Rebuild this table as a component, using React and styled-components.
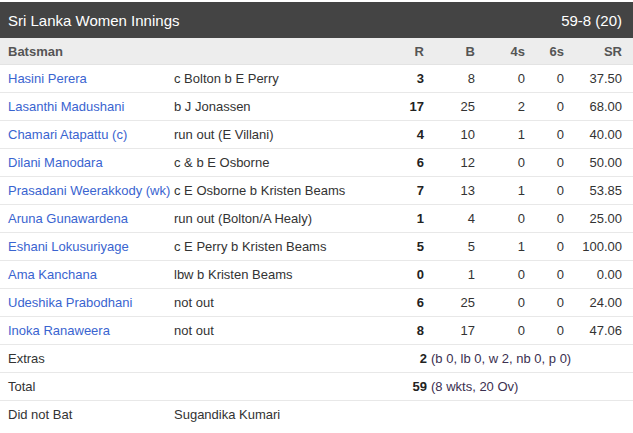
import React from 'react'
import styled, { createGlobalStyle } from 'styled-components'

const GlobalStyle = createGlobalStyle`
  body {
    margin: 0;
    background: #fff;
    font-family: "Liberation Sans", Arial, sans-serif;
  }
`

const Card = styled.div`
  width: 633px;
  padding-top: 2px;
  font-size: 13px;
  color: #333;
`

const TitleBar = styled.div`
  display: flex;
  justify-content: space-between;
  align-items: center;
  height: 36px;
  padding: 0 11px 0 8px;
  background: #444;
  color: #fff;
  font-size: 15px;
`

const Row = styled.div`
  display: grid;
  grid-template-columns: 166px 206px 44px 51px 50px 39px 58px;
  align-items: center;
  height: ${p => (p.head ? 26 : 27)}px;
  padding: 0 11px 0 8px;
  background: ${p => (p.head ? '#ededed' : '#fff')};
  border-bottom: 1px solid ${p => (p.head ? '#e3e3e3' : '#e8e8e8')};
  color: ${p => (p.head ? '#555' : '#333')};
  font-weight: ${p => (p.head ? 'bold' : 'normal')};
  white-space: nowrap;

  &:last-child {
    border-bottom-color: transparent;
  }
`

const Name = styled.span`
  color: ${p => (p.link ? '#3a64d0' : '#333')};
`

const Num = styled.span`
  text-align: right;
  font-weight: ${p => (p.strong ? 'bold' : 'inherit')};
  color: ${p => (p.strong ? '#222' : 'inherit')};
`

const Summary = styled.span`
  grid-column: 3 / -1;
  display: flex;
`

const SummaryNum = styled.span`
  width: 47px;
  text-align: right;
  font-weight: bold;
  color: #222;
`

const Detail = styled.span`
  margin-left: 4px;
  color: #3b3050;
`

const batsmen = [
  ['Hasini Perera', 'c Bolton b E Perry', 3, 8, 0, 0, '37.50'],
  ['Lasanthi Madushani', 'b J Jonassen', 17, 25, 2, 0, '68.00'],
  ['Chamari Atapattu (c)', 'run out (E Villani)', 4, 10, 1, 0, '40.00'],
  ['Dilani Manodara', 'c & b E Osborne', 6, 12, 0, 0, '50.00'],
  ['Prasadani Weerakkody (wk)', 'c E Osborne b Kristen Beams', 7, 13, 1, 0, '53.85'],
  ['Aruna Gunawardena', 'run out (Bolton/A Healy)', 1, 4, 0, 0, '25.00'],
  ['Eshani Lokusuriyage', 'c E Perry b Kristen Beams', 5, 5, 1, 0, '100.00'],
  ['Ama Kanchana', 'lbw b Kristen Beams', 0, 1, 0, 0, '0.00'],
  ['Udeshika Prabodhani', 'not out', 6, 25, 0, 0, '24.00'],
  ['Inoka Ranaweera', 'not out', 8, 17, 0, 0, '47.06'],
]

export default function App() {
  return (
    <Card>
      <GlobalStyle />
      <TitleBar>
        <span>Sri Lanka Women Innings</span>
        <span>59-8 (20)</span>
      </TitleBar>
      <Row head>
        <span>Batsman</span>
        <span />
        <Num>R</Num>
        <Num>B</Num>
        <Num>4s</Num>
        <Num>6s</Num>
        <Num>SR</Num>
      </Row>
      {batsmen.map(([name, how, r, b, fours, sixes, sr]) => (
        <Row key={name}>
          <Name link>{name}</Name>
          <span>{how}</span>
          <Num strong>{r}</Num>
          <Num>{b}</Num>
          <Num>{fours}</Num>
          <Num>{sixes}</Num>
          <Num>{sr}</Num>
        </Row>
      ))}
      <Row>
        <Name>Extras</Name>
        <span />
        <Summary>
          <SummaryNum>2</SummaryNum>
          <Detail>(b 0, lb 0, w 2, nb 0, p 0)</Detail>
        </Summary>
      </Row>
      <Row>
        <Name>Total</Name>
        <span />
        <Summary>
          <SummaryNum>59</SummaryNum>
          <Detail>(8 wkts, 20 Ov)</Detail>
        </Summary>
      </Row>
      <Row>
        <Name>Did not Bat</Name>
        <span>Sugandika Kumari</span>
      </Row>
    </Card>
  )
}
